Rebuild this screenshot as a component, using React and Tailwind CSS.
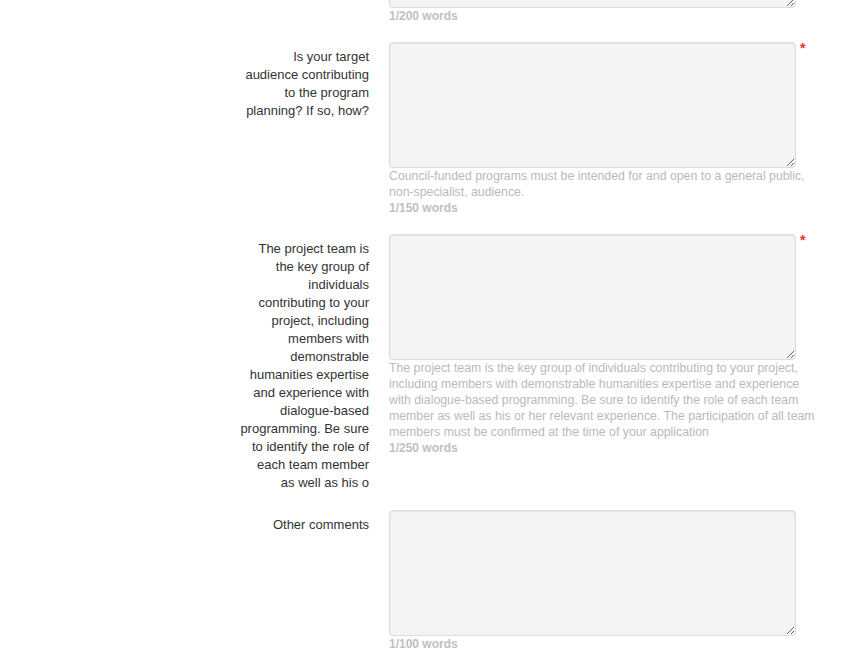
import React from 'react';

const rows = [
    {
        label: 'Is your target audience contributing to the program planning? If so, how?',
        required: true,
        help: 'Council-funded programs must be intended for and open to a general public, non-specialist, audience.',
        count: '1/150 words'
    },
    {
        label: 'The project team is the key group of individuals contributing to your project, including members with demonstrable humanities expertise and experience with dialogue-based programming. Be sure to identify the role of each team member as well as his o',
        required: true,
        help: 'The project team is the key group of individuals contributing to your project, including members with demonstrable humanities expertise and experience with dialogue-based programming. Be sure to identify the role of each team member as well as his or her relevant experience. The participation of all team members must be confirmed at the time of your application',
        count: '1/250 words'
    },
    {
        label: 'Other comments',
        required: false,
        help: null,
        count: '1/100 words'
    }
];

function Field({label, required, help, count}) {
    return (
        <div className="flex items-start gap-[20px] mb-[18px]">
            <label className="w-[129px] shrink-0 pt-[6px] text-right text-[13px] leading-[18px] text-[#333]">
                {label}
            </label>
            <div className="w-[430px] shrink-0">
                <div className="flex items-start">
                    <textarea
                        className="block w-[407px] h-[126px] rounded-[4px] border border-[#dcdcdc] bg-[#f4f4f4] shadow-[inset_0_1px_2px_rgba(0,0,0,0.07)] focus:outline-none"/>
                    {required && <span className="ml-[4px] -mt-[1px] text-[14px] font-bold leading-[14px] text-[#e8322e]">*</span>}
                </div>
                {help && <p className="text-[12.3px] leading-[16px] text-[#bababa]">{help}</p>}
                <p className="text-[12px] leading-[16px] font-bold text-[#c0c0c0]">{count}</p>
            </div>
        </div>
    );
}

export default function App() {
    return (
        <div className="w-[848px] h-[671px] overflow-hidden bg-white" style={{fontFamily: '"Liberation Sans", Arial, sans-serif'}}>
            <div className="pl-[240px] -mt-[118px]">
                <div className="flex items-start gap-[20px] mb-[18px]">
                    <div className="w-[129px] shrink-0"/>
                    <div className="w-[430px] shrink-0">
                        <textarea
                            className="block w-[407px] h-[126px] rounded-[4px] border border-[#dcdcdc] bg-[#f4f4f4] shadow-[inset_0_1px_2px_rgba(0,0,0,0.07)] focus:outline-none"/>
                        <p className="text-[12px] leading-[16px] font-bold text-[#c0c0c0]">1/200 words</p>
                    </div>
                </div>
                {rows.map((r, i) => <Field key={i} {...r}/>)}
            </div>
        </div>
    );
}
